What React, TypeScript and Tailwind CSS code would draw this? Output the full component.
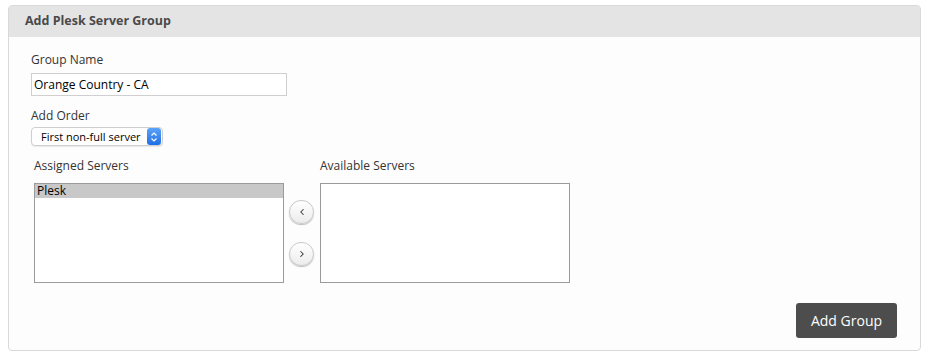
import { ChevronLeft, ChevronRight } from 'lucide-react';

const RoundButton = ({ children }: { children: React.ReactNode }) => (
  <button className="w-[25px] h-[24px] rounded-full border border-[#c9c9c9] bg-gradient-to-b from-white to-[#ececec] shadow-[0_1px_1px_rgba(0,0,0,0.25)] flex items-center justify-center text-[#333]">
    {children}
  </button>
);

const App = () => {
  return (
    <div className="w-[930px] h-[357px] bg-white font-['Open_Sans',sans-serif] pt-[5px] pl-[8px]">
      <div className="w-[913px] h-[346px] rounded-[4px] border border-[#d9d9d9] bg-[#fdfdfd] overflow-hidden flex flex-col">
        {/* Header */}
        <div className="h-[31px] bg-[#e4e4e4] flex items-center pl-[16px] shrink-0">
          <h2 className="text-[12.5px] font-bold text-[#4a4a4a] leading-none">Add Plesk Server Group</h2>
        </div>

        {/* Body */}
        <div className="flex-1 flex flex-col pl-[22px] pt-[15px] pr-[22px]">
          <label className="text-[12px] leading-[16px] text-[#333]">Group Name</label>
          <div className="mt-[5px] w-[256px] h-[23px] border border-[#cfcfcf] bg-white flex items-center pl-[2px] text-[12px] text-black">
            Orange Country - CA
          </div>

          <label className="mt-[12px] text-[12px] leading-[16px] text-[#333]">Add Order</label>
          <div className="mt-[3px] w-[132px] h-[19px] rounded-[4px] border border-[#cfcfcf] bg-white flex items-center justify-between shadow-[0_1px_1px_rgba(0,0,0,0.08)]">
            <span className="pl-[9px] text-[11px] text-black leading-none whitespace-nowrap">First non-full server</span>
            <span className="w-[14px] h-[17px] mr-[1px] shrink-0 rounded-[3px] bg-gradient-to-b from-[#5aa3f7] to-[#1f6fe5] flex items-center justify-center">
              <svg width="8" height="12" viewBox="0 0 8 12" fill="none" stroke="white" strokeWidth="1.2">
                <path d="M1.5 4.5 L4 2 L6.5 4.5" />
                <path d="M1.5 7.5 L4 10 L6.5 7.5" />
              </svg>
            </span>
          </div>

          <div className="mt-[12px] flex items-start">
            <div className="flex flex-col ml-[3px]">
              <label className="text-[12px] leading-[16px] text-[#333]">Assigned Servers</label>
              <div className="mt-[9px] w-[250px] h-[100px] border border-[#9b9b9b] bg-white">
                <div className="h-[14px] bg-[#c8c8c8] text-[12px] leading-[14px] text-black pl-[2px]">Plesk</div>
              </div>
            </div>

            <div className="flex flex-col gap-[18px] mt-[42px] ml-[5px] mr-[6px]">
              <RoundButton>
                <ChevronLeft size={10} strokeWidth={2.5} />
              </RoundButton>
              <RoundButton>
                <ChevronRight size={10} strokeWidth={2.5} />
              </RoundButton>
            </div>

            <div className="flex flex-col">
              <label className="text-[12px] leading-[16px] text-[#333]">Available Servers</label>
              <div className="mt-[9px] w-[250px] h-[100px] border border-[#9b9b9b] bg-white" />
            </div>
          </div>

          <div className="flex justify-end mt-[20px]">
            <button className="w-[101px] h-[35px] rounded-[3px] bg-[#4d4d4d] text-white text-[14px] mr-[1px]">
              Add Group
            </button>
          </div>
        </div>
      </div>
    </div>
  );
};

export default App;
